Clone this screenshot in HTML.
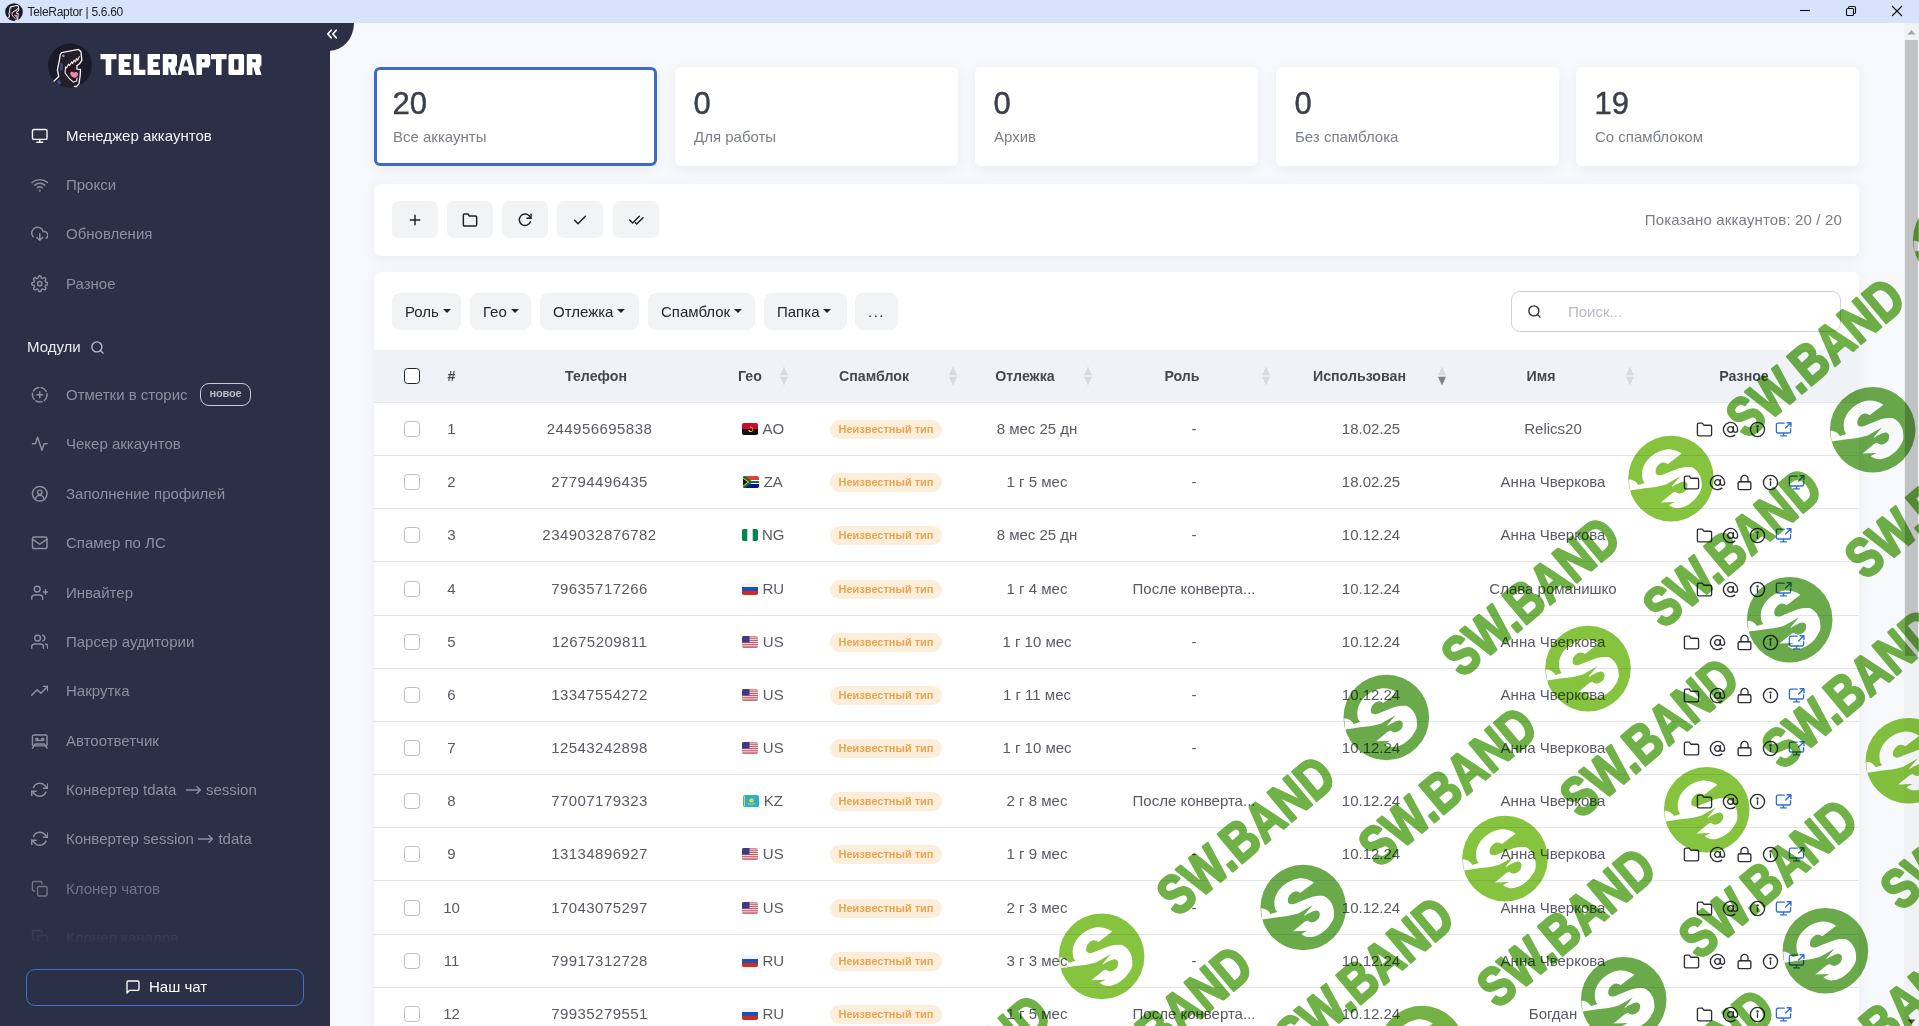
<!DOCTYPE html>
<html lang="ru">
<head>
<meta charset="utf-8">
<title>TeleRaptor | 5.6.60</title>
<style>
*{box-sizing:border-box;margin:0;padding:0}
html,body{width:1919px;height:1026px;overflow:hidden;background:#f8f9fc;font-family:"Liberation Sans",sans-serif;}
body{position:relative}
.abs{position:absolute}
/* title bar */
#titlebar{position:absolute;left:0;top:0;width:1919px;height:23px;background:#d6e3fb;}
#titlebar .ttl{position:absolute;left:27.5px;top:5px;font-size:12px;color:#1c1f26;line-height:15px;letter-spacing:-.3px}
#titlebar svg{position:absolute}
/* sidebar */
#sidebar{position:absolute;left:0;top:23px;width:330px;height:1003px;background:#2b3046;overflow:hidden}
#tab{z-index:2;position:absolute;left:318px;top:23px;width:36px;height:28px;background:#2b3046;border-bottom-right-radius:25px 28px;}
.mi{position:absolute;left:0;width:330px;height:24px;color:#8b90a0;font-size:15px;line-height:24px;white-space:nowrap}
.mi .t{position:absolute;left:66px;top:1px}
.mi svg{position:absolute;left:30.75px;top:4.25px;width:17.5px;height:17.5px;fill:none;stroke:currentColor;stroke-width:1.95;stroke-linecap:round;stroke-linejoin:round}
.mi.act{color:#f1f2f6}
/* main */
.card{position:absolute;background:#fff;border-radius:6px;box-shadow:0 3px 14px rgba(60,72,110,.07)}
.stat .n{position:absolute;left:18.5px;top:20px;font-size:31px;line-height:34px;color:#3b3f4a;-webkit-text-stroke:.45px #3b3f4a}
.stat .l{position:absolute;left:19px;top:59.5px;font-size:15px;line-height:20px;color:#7c7f88}
.tb{position:absolute;top:17px;width:46px;height:37px;border-radius:7px;background:#f1f3f5}
.tb svg{position:absolute;left:15px;top:10.5px;width:16px;height:16px;fill:none;stroke:#1d2026;stroke-width:2.2;stroke-linecap:round;stroke-linejoin:round}
.fb{position:absolute;top:21px;height:37px;border-radius:8px;background:#f1f3f5;font-size:15px;line-height:37px;color:#23262d;padding-left:13px;white-space:nowrap}
.fb i{display:inline-block;width:0;height:0;border-left:4px solid transparent;border-right:4px solid transparent;border-top:4.5px solid #23262d;margin-left:4px;vertical-align:3.8px}

.cb{position:absolute;width:16px;height:16px;border-radius:3.5px;background:#fff}
.hc{position:absolute;top:0;width:200px;text-align:center;font-size:14.2px;font-weight:bold;line-height:52px;color:#45494f;white-space:nowrap}
.row{position:absolute;left:0;width:1485px;height:53px;border-bottom:1px solid #e3e5e9}
.tc{position:absolute;top:0;width:200px;text-align:center;font-size:15px;line-height:52px;color:#585b63;white-space:nowrap}
.tx{font-size:15px;line-height:20px;color:#585b63}
.bd{position:absolute;left:456px;top:17px;width:112px;height:19px;border-radius:10px;background:#fdeedc;color:#e9a44e;font-size:11px;font-weight:bold;line-height:19px;text-align:center;white-space:nowrap}
.ri{position:absolute;top:18px;width:17px;height:17px;fill:none;stroke-width:1.9;stroke-linecap:round;stroke-linejoin:round}
</style>
</head>
<body>
<div id="titlebar">
  <svg style="left:5px;top:3px" width="18" height="18" viewBox="-0.5 0 45 45"><circle cx="22" cy="22.5" r="22" fill="#1a1b29"/>
<path d="M6.1 38.1L10.7 33.5L9.4 26.9L11.2 18.3L12.2 11.7L13.7 9.7L26.4 7.1L30.5 6.4L33 8.7L33.8 17.3L31.5 20.8L28.9 22.8V26.1L32.5 26.4L32.2 32.5L31 40.6L28.4 43.6L20 44.4L11 41.5Z" fill="#221f27"/>
<path d="M31.2 13.8L27.5 16.3L23.5 19L19.8 21.8L17.6 24L16.9 29.9L21.3 35.5L25.4 39.1L28.6 38L29.3 33.5L30.3 27L28.9 26.1V22.8L31.5 20.8Z" fill="#2b1720"/>
<path d="M12.5 20l2.6 1.2-.6 5.5-2.8 1.2zM8.6 38.5l3-2.6 1.6 4.6-2.4 1.6z" fill="#45448a"/>
<path d="M13.8 12.3l2.4-.9.6 2-2.2.9z" fill="#a58fb0"/>
<path d="M22 30.3Q23.5 27.6 26 29.8Q28.3 28.2 30 30.2Q30.2 33.6 27.4 34.8Q23.5 35 22 30.3Z" fill="#e98bab"/>
<path d="M31.3 13.6L29.7 17.2L28.6 15.4L27.4 19L26.2 17.1L24.6 20.6L23.6 18.9L21.6 22.4L20.6 21.1L18.6 25L17.6 23.8L17 29.9L21.3 35.5L25.4 39.1L28.6 38L29.1 35" fill="none" stroke="#f4eef3" stroke-width="2" stroke-linejoin="round" stroke-linecap="round"/>
<path d="M6.1 38.1L10.7 33.5L9.4 26.9L11.2 18.3L12.2 11.7L13.7 9.7L26.4 7.1L30.5 6.4L33 8.7L33.8 17.3L31.5 20.8L28.9 22.8V26.1L32.5 26.4L32.2 32.5L31 40.6L28.4 43.6L26.4 43.4" fill="none" stroke="#f4eef3" stroke-width="2.6" stroke-linejoin="round" stroke-linecap="round"/></svg>
  <div class="ttl">TeleRaptor | 5.6.60</div>
  <svg style="left:1799px;top:5px" width="12" height="12" viewBox="0 0 12 12"><path d="M1 5.5H11" stroke="#111" stroke-width="1.1" fill="none"/></svg>
  <svg style="left:1845px;top:5px" width="12" height="12" viewBox="0 0 12 12"><rect x="1.5" y="3.5" width="7" height="7" rx="1.3" fill="none" stroke="#111" stroke-width="1.1"/><path d="M3.5 3.5V2.8Q3.5 1.5 4.8 1.5H9.2Q10.5 1.5 10.5 2.8V7.2Q10.5 8.5 9.2 8.5H8.5" fill="none" stroke="#111" stroke-width="1.1"/></svg>
  <svg style="left:1891px;top:5px" width="12" height="12" viewBox="0 0 12 12"><path d="M1 1L11 11M11 1L1 11" stroke="#111" stroke-width="1.1" fill="none"/></svg>
</div>

<div id="tab"><svg class="abs" style="left:8px;top:6px" width="12" height="10" viewBox="0 0 14 12" fill="none" stroke="#fff" stroke-width="2.1" stroke-linecap="round" stroke-linejoin="round"><path d="M6 1.5L2 6l4 4.5M12 1.5L8 6l4 4.5"/></svg></div>
<div id="sidebar">
<!--SIDEBAR-->
<svg class="abs" style="left:48px;top:20px" width="44" height="45" viewBox="0 0 44 45"><circle cx="22" cy="22.5" r="22" fill="#1a1b29"/>
<path d="M6.1 38.1L10.7 33.5L9.4 26.9L11.2 18.3L12.2 11.7L13.7 9.7L26.4 7.1L30.5 6.4L33 8.7L33.8 17.3L31.5 20.8L28.9 22.8V26.1L32.5 26.4L32.2 32.5L31 40.6L28.4 43.6L20 44.4L11 41.5Z" fill="#221f27"/>
<path d="M31.2 13.8L27.5 16.3L23.5 19L19.8 21.8L17.6 24L16.9 29.9L21.3 35.5L25.4 39.1L28.6 38L29.3 33.5L30.3 27L28.9 26.1V22.8L31.5 20.8Z" fill="#2b1720"/>
<path d="M12.5 20l2.6 1.2-.6 5.5-2.8 1.2zM8.6 38.5l3-2.6 1.6 4.6-2.4 1.6z" fill="#45448a"/>
<path d="M13.8 12.3l2.4-.9.6 2-2.2.9z" fill="#a58fb0"/>
<path d="M22 30.3Q23.5 27.6 26 29.8Q28.3 28.2 30 30.2Q30.2 33.6 27.4 34.8Q23.5 35 22 30.3Z" fill="#e98bab"/>
<path d="M31.3 13.6L29.7 17.2L28.6 15.4L27.4 19L26.2 17.1L24.6 20.6L23.6 18.9L21.6 22.4L20.6 21.1L18.6 25L17.6 23.8L17 29.9L21.3 35.5L25.4 39.1L28.6 38L29.1 35" fill="none" stroke="#f4eef3" stroke-width="1.1" stroke-linejoin="round" stroke-linecap="round"/>
<path d="M6.1 38.1L10.7 33.5L9.4 26.9L11.2 18.3L12.2 11.7L13.7 9.7L26.4 7.1L30.5 6.4L33 8.7L33.8 17.3L31.5 20.8L28.9 22.8V26.1L32.5 26.4L32.2 32.5L31 40.6L28.4 43.6L26.4 43.4" fill="none" stroke="#f4eef3" stroke-width="1.35" stroke-linejoin="round" stroke-linecap="round"/></svg>
<svg class="abs" style="left:100px;top:31px" width="166" height="22" viewBox="0 0 166 22"><path fill="#fff" d="M0.50 0.00h16.00v5.20h-16.00zM5.70 0.00h5.60v21.00h-5.60zM18.70 0.00h5.60v21.00h-5.60zM18.70 0.00h12.40v5.20h-12.40zM18.70 7.90h10.80v5.20h-10.80zM18.70 15.80h12.40v5.20h-12.40zM33.60 0.00h5.60v21.00h-5.60zM33.60 15.80h11.80v5.20h-11.80zM47.60 0.00h5.60v21.00h-5.60zM47.60 0.00h12.40v5.20h-12.40zM47.60 7.90h10.80v5.20h-10.80zM47.60 15.80h12.40v5.20h-12.40zM62.80 0.00h5.60v21.00h-5.60zM62.80 0.00h13.00v5.20h-13.00zM71.40 1.20h5.60v10.60h-5.60zM62.80 8.30h13.00v5.20h-13.00zM68.90 12.5h5.60l2.60 8.50h-5.80zM77.40 21.0L82.70 0h6.8L94.80 21.0h-5.7l-1.0 -4.2h-6.00l-1.0 4.2zM83.50 12.6h5.2L86.10 4.6zM96.40 0.00h5.60v21.00h-5.60zM96.40 0.00h12.60v5.20h-12.60zM104.60 1.20h5.60v10.60h-5.60zM96.40 8.30h12.60v5.20h-12.60zM111.00 0.00h15.60v5.20h-15.60zM116.00 0.00h5.60v21.00h-5.60zM129.70 0h13.20l1.2 1.2v18.6l-1.2 1.2h-13.20l-1.2 -1.2v-18.6zM134.10 5.2v10.6h4.40v-10.6zM146.80 0.00h5.60v21.00h-5.60zM146.80 0.00h13.40v5.20h-13.40zM155.80 1.20h5.60v10.60h-5.60zM146.80 8.30h13.40v5.20h-13.40zM153.30 12.5h5.60l2.60 8.50h-5.80z"/></svg>
<div class="mi act" style="top:100px;"><svg viewBox="0 0 24 24"><rect x="2" y="3.5" width="20" height="13.5" rx="2"/><path d="M8 21h8M12 17v4"/></svg><span class="t">Менеджер аккаунтов</span></div>
<div class="mi " style="top:149px;"><svg viewBox="0 0 24 24"><path d="M5 12.55a11 11 0 0 1 14.08 0M1.42 9a16 16 0 0 1 21.16 0M8.53 16.11a6 6 0 0 1 6.95 0"/><circle cx="12" cy="20" r=".6"/></svg><span class="t">Прокси</span></div>
<div class="mi " style="top:198px;"><svg viewBox="0 0 24 24"><path d="M8 17l4 4 4-4M12 12v9"/><path d="M20.88 18.09A5 5 0 0 0 18 9h-1.26A8 8 0 1 0 3 16.29"/></svg><span class="t">Обновления</span></div>
<div class="mi " style="top:248px;"><svg viewBox="0 0 24 24"><circle cx="12" cy="12" r="3"/><path d="M19.4 15a1.65 1.65 0 0 0 .33 1.82l.06.06a2 2 0 1 1-2.83 2.83l-.06-.06a1.65 1.65 0 0 0-1.82-.33 1.65 1.65 0 0 0-1 1.51V21a2 2 0 0 1-4 0v-.09A1.65 1.65 0 0 0 9 19.4a1.65 1.65 0 0 0-1.82.33l-.06.06a2 2 0 1 1-2.83-2.83l.06-.06a1.65 1.65 0 0 0 .33-1.82 1.65 1.65 0 0 0-1.51-1H3a2 2 0 0 1 0-4h.09A1.65 1.65 0 0 0 4.6 9a1.65 1.65 0 0 0-.33-1.82l-.06-.06a2 2 0 1 1 2.83-2.83l.06.06a1.65 1.65 0 0 0 1.82.33H9a1.65 1.65 0 0 0 1-1.51V3a2 2 0 0 1 4 0v.09a1.65 1.65 0 0 0 1 1.51 1.65 1.65 0 0 0 1.82-.33l.06-.06a2 2 0 1 1 2.83 2.83l-.06.06a1.65 1.65 0 0 0-.33 1.82V9a1.65 1.65 0 0 0 1.51 1H21a2 2 0 0 1 0 4h-.09a1.65 1.65 0 0 0-1.51 1z"/></svg><span class="t">Разное</span></div>
<div class="abs" style="left:27px;top:312px;font-size:15px;line-height:24px;color:#e9ebf1">Модули</div><svg class="abs" style="left:90px;top:317px" width="15" height="15" viewBox="0 0 24 24" fill="none" stroke="#b9bcc8" stroke-width="2.2" stroke-linecap="round"><circle cx="11" cy="11" r="8"/><path d="M21 21l-4.3-4.3"/></svg>
<div class="mi " style="top:359px;"><svg viewBox="0 0 24 24"><circle cx="12" cy="12" r="10" stroke-dasharray="9 3.2"/><path d="M12 8v8M8 12h8"/></svg><span class="t">Отметки в сторис</span><span class="abs" style="left:200px;top:1px;width:51px;height:23px;border:1.5px solid #c9ccd6;border-radius:9px;font-size:11px;font-weight:bold;line-height:19px;letter-spacing:-.2px;text-align:center;color:#b7bac6">новое</span></div>
<div class="mi " style="top:408px;"><svg viewBox="0 0 24 24"><path d="M22 12h-4l-3 9L9 3l-3 9H2"/></svg><span class="t">Чекер аккаунтов</span></div>
<div class="mi " style="top:458px;"><svg viewBox="0 0 24 24"><circle cx="12" cy="12" r="10"/><circle cx="12" cy="10" r="3"/><path d="M6.2 18.7a6 6 0 0 1 11.6 0"/></svg><span class="t">Заполнение профилей</span></div>
<div class="mi " style="top:507px;"><svg viewBox="0 0 24 24"><rect x="2" y="4" width="20" height="16" rx="2.5"/><path d="M22 7l-10 7L2 7"/></svg><span class="t">Спамер по ЛС</span></div>
<div class="mi " style="top:557px;"><svg viewBox="0 0 24 24"><path d="M16 21v-2a4 4 0 0 0-4-4H5a4 4 0 0 0-4 4v2"/><circle cx="8.5" cy="7" r="4"/><path d="M20 8v6M23 11h-6"/></svg><span class="t">Инвайтер</span></div>
<div class="mi " style="top:606px;"><svg viewBox="0 0 24 24"><path d="M17 21v-2a4 4 0 0 0-4-4H5a4 4 0 0 0-4 4v2"/><circle cx="9" cy="7" r="4"/><path d="M23 21v-2a4 4 0 0 0-3-3.87M16 3.13a4 4 0 0 1 0 7.75"/></svg><span class="t">Парсер аудитории</span></div>
<div class="mi " style="top:655px;"><svg viewBox="0 0 24 24"><path d="M23 6l-9.5 9.5-5-5L1 18"/><path d="M17 6h6v6"/></svg><span class="t">Накрутка</span></div>
<div class="mi " style="top:705px;"><svg viewBox="0 0 24 24"><rect x="2" y="4" width="20" height="15" rx="2"/><circle cx="8" cy="10" r="1.6"/><circle cx="16" cy="10" r="1.6"/><path d="M8 11.6h8M2 22l3.5-5.5h13L22 22"/></svg><span class="t">Автоответчик</span></div>
<div class="mi " style="top:754px;"><svg viewBox="0 0 24 24"><path d="M23 4v6h-6M1 20v-6h6"/><path d="M3.51 9a9 9 0 0 1 14.85-3.36L23 10M1 14l4.64 4.36A9 9 0 0 0 20.49 15"/></svg><span class="t">Конвертер tdata<svg style="position:static;display:inline-block;width:15px;height:10px;margin:0 5px 0 9.5px;stroke-width:1.35" viewBox="0 0 15 10"><path d="M.5 5h14M10.8 1.6L14.5 5l-3.7 3.4"/></svg>session</span></div>
<div class="mi " style="top:803px;"><svg viewBox="0 0 24 24"><path d="M23 4v6h-6M1 20v-6h6"/><path d="M3.51 9a9 9 0 0 1 14.85-3.36L23 10M1 14l4.64 4.36A9 9 0 0 0 20.49 15"/></svg><span class="t">Конвертер session<svg style="position:static;display:inline-block;width:15px;height:10px;margin:0 5px 0 4.5px;stroke-width:1.35" viewBox="0 0 15 10"><path d="M.5 5h14M10.8 1.6L14.5 5l-3.7 3.4"/></svg>tdata</span></div>
<div class="mi " style="top:853px;opacity:.7"><svg viewBox="0 0 24 24"><rect x="9" y="9" width="13" height="13" rx="2"/><path d="M5 15H4a2 2 0 0 1-2-2V4a2 2 0 0 1 2-2h9a2 2 0 0 1 2 2v1"/></svg><span class="t">Клонер чатов</span></div>
<div class="mi " style="top:902px;opacity:.35"><svg viewBox="0 0 24 24"><rect x="9" y="9" width="13" height="13" rx="2"/><path d="M5 15H4a2 2 0 0 1-2-2V4a2 2 0 0 1 2-2h9a2 2 0 0 1 2 2v1"/></svg><span class="t">Клонер каналов</span></div>
<div class="abs" style="left:0;top:888px;width:330px;height:31px;background:linear-gradient(#2b304600,#2b3046cc)"></div><div class="abs" style="left:0;top:919px;width:330px;height:28px;background:#2b3046"></div>
<div class="abs" style="left:26px;top:946px;width:278px;height:37px;border:1.5px solid #3f6fd0;border-radius:9px;color:#fff;font-size:15px;line-height:34px"><svg class="abs" style="left:98px;top:9px" width="16" height="16" viewBox="0 0 24 24" fill="none" stroke="#fff" stroke-width="2" stroke-linejoin="round"><path d="M21 15a2 2 0 0 1-2 2H7l-4 4V5a2 2 0 0 1 2-2h14a2 2 0 0 1 2 2z"/></svg><span class="abs" style="left:122px;top:0">Наш чат</span></div>
<!--/SIDEBAR-->
</div>

<div id="main">
<!--MAIN-->
<div class="card stat" style="left:374px;top:67px;width:283px;height:99px;border:3px solid #3e6bc4;"><div class="n" style="margin:-3px 0 0 -3px">20</div><div class="l" style="margin:-3px 0 0 -3px">Все аккаунты</div></div>
<div class="card stat" style="left:675px;top:67px;width:283px;height:99px;"><div class="n" style="margin:0px 0 0 0px">0</div><div class="l" style="margin:0px 0 0 0px">Для работы</div></div>
<div class="card stat" style="left:975px;top:67px;width:283px;height:99px;"><div class="n" style="margin:0px 0 0 0px">0</div><div class="l" style="margin:0px 0 0 0px">Архив</div></div>
<div class="card stat" style="left:1276px;top:67px;width:283px;height:99px;"><div class="n" style="margin:0px 0 0 0px">0</div><div class="l" style="margin:0px 0 0 0px">Без спамблока</div></div>
<div class="card stat" style="left:1576px;top:67px;width:283px;height:99px;"><div class="n" style="margin:0px 0 0 0px">19</div><div class="l" style="margin:0px 0 0 0px">Со спамблоком</div></div>
<div class="card" style="left:374px;top:184px;width:1485px;height:72px"><div class="tb" style="left:18px"><svg viewBox="0 0 24 24"><path d="M12 5v14M5 12h14"/></svg></div><div class="tb" style="left:73px"><svg viewBox="0 0 24 24"><path d="M22 19a2 2 0 0 1-2 2H4a2 2 0 0 1-2-2V5a2 2 0 0 1 2-2h5l2 3h9a2 2 0 0 1 2 2z"/></svg></div><div class="tb" style="left:128px"><svg viewBox="0 0 24 24"><path d="M21 3.5v6h-6"/><path d="M20.2 14.5A8.6 8.6 0 1 1 18.2 5.6L21 9.5"/></svg></div><div class="tb" style="left:183px"><svg viewBox="0 0 24 24"><path d="M20 6.5L9 17.5l-5-5"/></svg></div><div class="tb" style="left:238.5px"><svg viewBox="0 0 24 24"><path d="M17 6.5L7 16.5l-4.5-4.5"/><path d="M22.5 8.5L13 18l-1.8-1.8"/></svg></div><div class="abs" style="right:17px;top:26px;font-size:15px;line-height:20px;color:#7a7d86;white-space:nowrap;letter-spacing:.15px">Показано аккаунтов: 20 / 20</div></div>
<div class="card" style="left:374px;top:272px;width:1485px;height:800px;overflow:hidden"><div class="fb" style="left:18px;width:69px">Роль<i></i></div><div class="fb" style="left:96px;width:61px">Гео<i></i></div><div class="fb" style="left:166px;width:99px">Отлежка<i></i></div><div class="fb" style="left:274px;width:107px">Спамблок<i></i></div><div class="fb" style="left:390px;width:83px">Папка<i></i></div><div class="fb" style="left:481px;width:43px;padding-left:13px;letter-spacing:1.5px">...</div><div class="abs" style="left:1137px;top:19px;width:330px;height:41px;border:1px solid #cfd2d8;border-radius:9px;background:#fff"><svg class="abs" style="left:15px;top:12px" width="15" height="15" viewBox="0 0 24 24" fill="none" stroke="#2a2d34" stroke-width="2.2" stroke-linecap="round"><circle cx="11" cy="11" r="8"/><path d="M21 21l-4.3-4.3"/></svg><span class="abs" style="left:56px;top:10px;font-size:15px;line-height:20px;color:#b8bbc2">Поиск...</span></div><div class="abs" style="left:0;top:78px;width:1485px;height:53px;background:#eff2f6;border-bottom:1px solid #e4e6ea"><span class="cb" style="left:30px;top:18px;border:1.5px solid #22252b;"></span><span class="hc" style="left:-22.5px">#</span><span class="hc" style="left:122px">Телефон</span><span class="hc" style="left:276px">Гео</span><svg class="abs" style="left:405px;top:15.5px" width="10" height="20" viewBox="0 0 10 20"><path d="M5 .5L9 9.3H1z" fill="#d7dae0"/><path d="M5 19.5L9 10.7H1z" fill="#d7dae0"/></svg><span class="hc" style="left:400px">Спамблок</span><svg class="abs" style="left:574px;top:15.5px" width="10" height="20" viewBox="0 0 10 20"><path d="M5 .5L9 9.3H1z" fill="#d7dae0"/><path d="M5 19.5L9 10.7H1z" fill="#d7dae0"/></svg><span class="hc" style="left:551px">Отлежка</span><svg class="abs" style="left:708.5px;top:15.5px" width="10" height="20" viewBox="0 0 10 20"><path d="M5 .5L9 9.3H1z" fill="#d7dae0"/><path d="M5 19.5L9 10.7H1z" fill="#d7dae0"/></svg><span class="hc" style="left:708px">Роль</span><svg class="abs" style="left:887px;top:15.5px" width="10" height="20" viewBox="0 0 10 20"><path d="M5 .5L9 9.3H1z" fill="#d7dae0"/><path d="M5 19.5L9 10.7H1z" fill="#d7dae0"/></svg><span class="hc" style="left:885.5px">Использован</span><svg class="abs" style="left:1063px;top:15.5px" width="10" height="20" viewBox="0 0 10 20"><path d="M5 .5L9 9.3H1z" fill="#d7dae0"/><path d="M5 19.5L9 10.7H1z" fill="#7e828a"/></svg><span class="hc" style="left:1067px">Имя</span><svg class="abs" style="left:1250.5px;top:15.5px" width="10" height="20" viewBox="0 0 10 20"><path d="M5 .5L9 9.3H1z" fill="#d7dae0"/><path d="M5 19.5L9 10.7H1z" fill="#d7dae0"/></svg><span class="hc" style="left:1270px">Разное</span></div><div class="row" style="top:131.0px"><span class="cb" style="left:30px;top:18px;border:1px solid #b9bcc3;"></span><span class="tc" style="left:-22.5px;">1</span><span class="tc" style="left:125.5px;letter-spacing:.45px">244956695838</span><span class="abs" style="left:289px;top:0;width:200px;height:52px;display:flex;align-items:center;justify-content:center"><svg width="16" height="12" viewBox="0 0 16 12" style="margin-right:4.5px;flex:none"><clipPath id="c0"><rect width="16" height="12" rx="1.8"/></clipPath><g clip-path="url(#c0)"><rect width="16" height="6" fill="#cc092f"/><rect y="6" width="16" height="6" fill="#111"/><path d="M6.2 7.5a2.6 2.6 0 1 0 1.5-3.6l1 .9a1.6 1.6 0 1 1-1.2 2.2z" fill="#f9d616"/></g></svg><span class="tx">AO</span></span><span class="bd">Неизвестный тип</span><span class="tc" style="left:563px;">8 мес 25 дн</span><span class="tc" style="left:720px;">-</span><span class="tc" style="left:897px;">18.02.25</span><span class="tc" style="left:1079px;">Relics20</span><svg class="ri" style="left:1322.2px;stroke:#2b2e35" viewBox="0 0 24 24"><path d="M22 19a2 2 0 0 1-2 2H4a2 2 0 0 1-2-2V5a2 2 0 0 1 2-2h5l2 3h9a2 2 0 0 1 2 2z"/></svg><svg class="ri" style="left:1348.4px;stroke:#2b2e35" viewBox="0 0 24 24"><circle cx="12" cy="12" r="4"/><path d="M16 8v5a3 3 0 0 0 6 0v-1a10 10 0 1 0-3.92 7.94"/></svg><svg class="ri" style="left:1374.6px;stroke:#2b2e35" viewBox="0 0 24 24"><circle cx="12" cy="12" r="10"/><path d="M12 16v-5"/><circle cx="12" cy="7.6" r=".7" fill="#2b2e35"/></svg><svg class="ri" style="left:1400.8px;stroke:#2f6ed3" viewBox="0 0 24 24"><path d="M13 3H4a2 2 0 0 0-2 2v10a2 2 0 0 0 2 2h16a2 2 0 0 0 2-2v-4M8 21h8M12 17v4M17 2.5h5.5V8M22.5 2.5L15 10"/></svg></div><div class="row" style="top:184.17px"><span class="cb" style="left:30px;top:18px;border:1px solid #b9bcc3;"></span><span class="tc" style="left:-22.5px;">2</span><span class="tc" style="left:125.5px;letter-spacing:.45px">27794496435</span><span class="abs" style="left:289px;top:0;width:200px;height:52px;display:flex;align-items:center;justify-content:center"><svg width="16" height="12" viewBox="0 0 16 12" style="margin-right:4.5px;flex:none"><clipPath id="c1"><rect width="16" height="12" rx="1.8"/></clipPath><g clip-path="url(#c1)"><rect width="16" height="12" fill="#fff"/><rect width="16" height="4" fill="#e03c31"/><rect y="8" width="16" height="4" fill="#001489"/><path d="M0 0l8 6-8 6z" fill="#007749"/><path d="M0 1.2v9.6L6.4 6z" fill="#ffb81c"/><path d="M0 2.6v6.8L4.5 6z" fill="#111"/><path d="M0 0h2l6.5 4.9H16v2.2H8.5L2 12H0v-1.2L6.4 6 0 1.2z" fill="#007749"/></g></svg><span class="tx">ZA</span></span><span class="bd">Неизвестный тип</span><span class="tc" style="left:563px;">1 г 5 мес</span><span class="tc" style="left:720px;">-</span><span class="tc" style="left:897px;">18.02.25</span><span class="tc" style="left:1079px;">Анна Чверкова</span><svg class="ri" style="left:1309.1px;stroke:#2b2e35" viewBox="0 0 24 24"><path d="M22 19a2 2 0 0 1-2 2H4a2 2 0 0 1-2-2V5a2 2 0 0 1 2-2h5l2 3h9a2 2 0 0 1 2 2z"/></svg><svg class="ri" style="left:1335.3px;stroke:#2b2e35" viewBox="0 0 24 24"><circle cx="12" cy="12" r="4"/><path d="M16 8v5a3 3 0 0 0 6 0v-1a10 10 0 1 0-3.92 7.94"/></svg><svg class="ri" style="left:1361.5px;stroke:#2b2e35" viewBox="0 0 24 24"><rect x="3" y="11" width="18" height="11" rx="2"/><path d="M7 11V7a5 5 0 0 1 10 0v4"/></svg><svg class="ri" style="left:1387.7px;stroke:#2b2e35" viewBox="0 0 24 24"><circle cx="12" cy="12" r="10"/><path d="M12 16v-5"/><circle cx="12" cy="7.6" r=".7" fill="#2b2e35"/></svg><svg class="ri" style="left:1413.9px;stroke:#2f6ed3" viewBox="0 0 24 24"><path d="M13 3H4a2 2 0 0 0-2 2v10a2 2 0 0 0 2 2h16a2 2 0 0 0 2-2v-4M8 21h8M12 17v4M17 2.5h5.5V8M22.5 2.5L15 10"/></svg></div><div class="row" style="top:237.34px"><span class="cb" style="left:30px;top:18px;border:1px solid #b9bcc3;"></span><span class="tc" style="left:-22.5px;">3</span><span class="tc" style="left:125.5px;letter-spacing:.45px">2349032876782</span><span class="abs" style="left:289px;top:0;width:200px;height:52px;display:flex;align-items:center;justify-content:center"><svg width="16" height="12" viewBox="0 0 16 12" style="margin-right:4.5px;flex:none"><clipPath id="c2"><rect width="16" height="12" rx="1.8"/></clipPath><g clip-path="url(#c2)"><rect width="16" height="12" fill="#fff"/><rect width="5.3" height="12" fill="#008751"/><rect x="10.7" width="5.3" height="12" fill="#008751"/></g></svg><span class="tx">NG</span></span><span class="bd">Неизвестный тип</span><span class="tc" style="left:563px;">8 мес 25 дн</span><span class="tc" style="left:720px;">-</span><span class="tc" style="left:897px;">10.12.24</span><span class="tc" style="left:1079px;">Анна Чверкова</span><svg class="ri" style="left:1322.2px;stroke:#2b2e35" viewBox="0 0 24 24"><path d="M22 19a2 2 0 0 1-2 2H4a2 2 0 0 1-2-2V5a2 2 0 0 1 2-2h5l2 3h9a2 2 0 0 1 2 2z"/></svg><svg class="ri" style="left:1348.4px;stroke:#2b2e35" viewBox="0 0 24 24"><circle cx="12" cy="12" r="4"/><path d="M16 8v5a3 3 0 0 0 6 0v-1a10 10 0 1 0-3.92 7.94"/></svg><svg class="ri" style="left:1374.6px;stroke:#2b2e35" viewBox="0 0 24 24"><circle cx="12" cy="12" r="10"/><path d="M12 16v-5"/><circle cx="12" cy="7.6" r=".7" fill="#2b2e35"/></svg><svg class="ri" style="left:1400.8px;stroke:#2f6ed3" viewBox="0 0 24 24"><path d="M13 3H4a2 2 0 0 0-2 2v10a2 2 0 0 0 2 2h16a2 2 0 0 0 2-2v-4M8 21h8M12 17v4M17 2.5h5.5V8M22.5 2.5L15 10"/></svg></div><div class="row" style="top:290.51px"><span class="cb" style="left:30px;top:18px;border:1px solid #b9bcc3;"></span><span class="tc" style="left:-22.5px;">4</span><span class="tc" style="left:125.5px;letter-spacing:.45px">79635717266</span><span class="abs" style="left:289px;top:0;width:200px;height:52px;display:flex;align-items:center;justify-content:center"><svg width="16" height="12" viewBox="0 0 16 12" style="margin-right:4.5px;flex:none"><clipPath id="c3"><rect width="16" height="12" rx="1.8"/></clipPath><g clip-path="url(#c3)"><rect width="16" height="4" fill="#f4f4f6"/><rect y="4" width="16" height="4" fill="#1c50b8"/><rect y="8" width="16" height="4" fill="#d52b1e"/></g></svg><span class="tx">RU</span></span><span class="bd">Неизвестный тип</span><span class="tc" style="left:563px;">1 г 4 мес</span><span class="tc" style="left:720px;">После конверта...</span><span class="tc" style="left:897px;">10.12.24</span><span class="tc" style="left:1079px;">Слава романишко</span><svg class="ri" style="left:1322.2px;stroke:#2b2e35" viewBox="0 0 24 24"><path d="M22 19a2 2 0 0 1-2 2H4a2 2 0 0 1-2-2V5a2 2 0 0 1 2-2h5l2 3h9a2 2 0 0 1 2 2z"/></svg><svg class="ri" style="left:1348.4px;stroke:#2b2e35" viewBox="0 0 24 24"><circle cx="12" cy="12" r="4"/><path d="M16 8v5a3 3 0 0 0 6 0v-1a10 10 0 1 0-3.92 7.94"/></svg><svg class="ri" style="left:1374.6px;stroke:#2b2e35" viewBox="0 0 24 24"><circle cx="12" cy="12" r="10"/><path d="M12 16v-5"/><circle cx="12" cy="7.6" r=".7" fill="#2b2e35"/></svg><svg class="ri" style="left:1400.8px;stroke:#2f6ed3" viewBox="0 0 24 24"><path d="M13 3H4a2 2 0 0 0-2 2v10a2 2 0 0 0 2 2h16a2 2 0 0 0 2-2v-4M8 21h8M12 17v4M17 2.5h5.5V8M22.5 2.5L15 10"/></svg></div><div class="row" style="top:343.68px"><span class="cb" style="left:30px;top:18px;border:1px solid #b9bcc3;"></span><span class="tc" style="left:-22.5px;">5</span><span class="tc" style="left:125.5px;letter-spacing:.45px">12675209811</span><span class="abs" style="left:289px;top:0;width:200px;height:52px;display:flex;align-items:center;justify-content:center"><svg width="16" height="12" viewBox="0 0 16 12" style="margin-right:4.5px;flex:none"><clipPath id="c4"><rect width="16" height="12" rx="1.8"/></clipPath><g clip-path="url(#c4)"><rect width="16" height="12" fill="#f4f4f4"/><path d="M0 .9h16M0 2.75h16M0 4.6h16M0 6.45h16M0 8.3h16M0 10.15h16M0 11.7h16" stroke="#c23b4b" stroke-width=".9"/><rect width="7.5" height="6.4" fill="#3c3b80"/></g></svg><span class="tx">US</span></span><span class="bd">Неизвестный тип</span><span class="tc" style="left:563px;">1 г 10 мес</span><span class="tc" style="left:720px;">-</span><span class="tc" style="left:897px;">10.12.24</span><span class="tc" style="left:1079px;">Анна Чверкова</span><svg class="ri" style="left:1309.1px;stroke:#2b2e35" viewBox="0 0 24 24"><path d="M22 19a2 2 0 0 1-2 2H4a2 2 0 0 1-2-2V5a2 2 0 0 1 2-2h5l2 3h9a2 2 0 0 1 2 2z"/></svg><svg class="ri" style="left:1335.3px;stroke:#2b2e35" viewBox="0 0 24 24"><circle cx="12" cy="12" r="4"/><path d="M16 8v5a3 3 0 0 0 6 0v-1a10 10 0 1 0-3.92 7.94"/></svg><svg class="ri" style="left:1361.5px;stroke:#2b2e35" viewBox="0 0 24 24"><rect x="3" y="11" width="18" height="11" rx="2"/><path d="M7 11V7a5 5 0 0 1 10 0v4"/></svg><svg class="ri" style="left:1387.7px;stroke:#2b2e35" viewBox="0 0 24 24"><circle cx="12" cy="12" r="10"/><path d="M12 16v-5"/><circle cx="12" cy="7.6" r=".7" fill="#2b2e35"/></svg><svg class="ri" style="left:1413.9px;stroke:#2f6ed3" viewBox="0 0 24 24"><path d="M13 3H4a2 2 0 0 0-2 2v10a2 2 0 0 0 2 2h16a2 2 0 0 0 2-2v-4M8 21h8M12 17v4M17 2.5h5.5V8M22.5 2.5L15 10"/></svg></div><div class="row" style="top:396.85px"><span class="cb" style="left:30px;top:18px;border:1px solid #b9bcc3;"></span><span class="tc" style="left:-22.5px;">6</span><span class="tc" style="left:125.5px;letter-spacing:.45px">13347554272</span><span class="abs" style="left:289px;top:0;width:200px;height:52px;display:flex;align-items:center;justify-content:center"><svg width="16" height="12" viewBox="0 0 16 12" style="margin-right:4.5px;flex:none"><clipPath id="c5"><rect width="16" height="12" rx="1.8"/></clipPath><g clip-path="url(#c5)"><rect width="16" height="12" fill="#f4f4f4"/><path d="M0 .9h16M0 2.75h16M0 4.6h16M0 6.45h16M0 8.3h16M0 10.15h16M0 11.7h16" stroke="#c23b4b" stroke-width=".9"/><rect width="7.5" height="6.4" fill="#3c3b80"/></g></svg><span class="tx">US</span></span><span class="bd">Неизвестный тип</span><span class="tc" style="left:563px;">1 г 11 мес</span><span class="tc" style="left:720px;">-</span><span class="tc" style="left:897px;">10.12.24</span><span class="tc" style="left:1079px;">Анна Чверкова</span><svg class="ri" style="left:1309.1px;stroke:#2b2e35" viewBox="0 0 24 24"><path d="M22 19a2 2 0 0 1-2 2H4a2 2 0 0 1-2-2V5a2 2 0 0 1 2-2h5l2 3h9a2 2 0 0 1 2 2z"/></svg><svg class="ri" style="left:1335.3px;stroke:#2b2e35" viewBox="0 0 24 24"><circle cx="12" cy="12" r="4"/><path d="M16 8v5a3 3 0 0 0 6 0v-1a10 10 0 1 0-3.92 7.94"/></svg><svg class="ri" style="left:1361.5px;stroke:#2b2e35" viewBox="0 0 24 24"><rect x="3" y="11" width="18" height="11" rx="2"/><path d="M7 11V7a5 5 0 0 1 10 0v4"/></svg><svg class="ri" style="left:1387.7px;stroke:#2b2e35" viewBox="0 0 24 24"><circle cx="12" cy="12" r="10"/><path d="M12 16v-5"/><circle cx="12" cy="7.6" r=".7" fill="#2b2e35"/></svg><svg class="ri" style="left:1413.9px;stroke:#2f6ed3" viewBox="0 0 24 24"><path d="M13 3H4a2 2 0 0 0-2 2v10a2 2 0 0 0 2 2h16a2 2 0 0 0 2-2v-4M8 21h8M12 17v4M17 2.5h5.5V8M22.5 2.5L15 10"/></svg></div><div class="row" style="top:450.02px"><span class="cb" style="left:30px;top:18px;border:1px solid #b9bcc3;"></span><span class="tc" style="left:-22.5px;">7</span><span class="tc" style="left:125.5px;letter-spacing:.45px">12543242898</span><span class="abs" style="left:289px;top:0;width:200px;height:52px;display:flex;align-items:center;justify-content:center"><svg width="16" height="12" viewBox="0 0 16 12" style="margin-right:4.5px;flex:none"><clipPath id="c6"><rect width="16" height="12" rx="1.8"/></clipPath><g clip-path="url(#c6)"><rect width="16" height="12" fill="#f4f4f4"/><path d="M0 .9h16M0 2.75h16M0 4.6h16M0 6.45h16M0 8.3h16M0 10.15h16M0 11.7h16" stroke="#c23b4b" stroke-width=".9"/><rect width="7.5" height="6.4" fill="#3c3b80"/></g></svg><span class="tx">US</span></span><span class="bd">Неизвестный тип</span><span class="tc" style="left:563px;">1 г 10 мес</span><span class="tc" style="left:720px;">-</span><span class="tc" style="left:897px;">10.12.24</span><span class="tc" style="left:1079px;">Анна Чверкова</span><svg class="ri" style="left:1309.1px;stroke:#2b2e35" viewBox="0 0 24 24"><path d="M22 19a2 2 0 0 1-2 2H4a2 2 0 0 1-2-2V5a2 2 0 0 1 2-2h5l2 3h9a2 2 0 0 1 2 2z"/></svg><svg class="ri" style="left:1335.3px;stroke:#2b2e35" viewBox="0 0 24 24"><circle cx="12" cy="12" r="4"/><path d="M16 8v5a3 3 0 0 0 6 0v-1a10 10 0 1 0-3.92 7.94"/></svg><svg class="ri" style="left:1361.5px;stroke:#2b2e35" viewBox="0 0 24 24"><rect x="3" y="11" width="18" height="11" rx="2"/><path d="M7 11V7a5 5 0 0 1 10 0v4"/></svg><svg class="ri" style="left:1387.7px;stroke:#2b2e35" viewBox="0 0 24 24"><circle cx="12" cy="12" r="10"/><path d="M12 16v-5"/><circle cx="12" cy="7.6" r=".7" fill="#2b2e35"/></svg><svg class="ri" style="left:1413.9px;stroke:#2f6ed3" viewBox="0 0 24 24"><path d="M13 3H4a2 2 0 0 0-2 2v10a2 2 0 0 0 2 2h16a2 2 0 0 0 2-2v-4M8 21h8M12 17v4M17 2.5h5.5V8M22.5 2.5L15 10"/></svg></div><div class="row" style="top:503.19px"><span class="cb" style="left:30px;top:18px;border:1px solid #b9bcc3;"></span><span class="tc" style="left:-22.5px;">8</span><span class="tc" style="left:125.5px;letter-spacing:.45px">77007179323</span><span class="abs" style="left:289px;top:0;width:200px;height:52px;display:flex;align-items:center;justify-content:center"><svg width="16" height="12" viewBox="0 0 16 12" style="margin-right:4.5px;flex:none"><clipPath id="c7"><rect width="16" height="12" rx="1.8"/></clipPath><g clip-path="url(#c7)"><rect width="16" height="12" fill="#26b2c9"/><circle cx="8.5" cy="5.4" r="2.2" fill="#f5d33c"/><path d="M5 8.6q3.5 2 7 0" stroke="#f5d33c" stroke-width=".9" fill="none"/><rect x=".8" y=".8" width="1.2" height="10.4" fill="#e8cf4a"/></g></svg><span class="tx">KZ</span></span><span class="bd">Неизвестный тип</span><span class="tc" style="left:563px;">2 г 8 мес</span><span class="tc" style="left:720px;">После конверта...</span><span class="tc" style="left:897px;">10.12.24</span><span class="tc" style="left:1079px;">Анна Чверкова</span><svg class="ri" style="left:1322.2px;stroke:#2b2e35" viewBox="0 0 24 24"><path d="M22 19a2 2 0 0 1-2 2H4a2 2 0 0 1-2-2V5a2 2 0 0 1 2-2h5l2 3h9a2 2 0 0 1 2 2z"/></svg><svg class="ri" style="left:1348.4px;stroke:#2b2e35" viewBox="0 0 24 24"><circle cx="12" cy="12" r="4"/><path d="M16 8v5a3 3 0 0 0 6 0v-1a10 10 0 1 0-3.92 7.94"/></svg><svg class="ri" style="left:1374.6px;stroke:#2b2e35" viewBox="0 0 24 24"><circle cx="12" cy="12" r="10"/><path d="M12 16v-5"/><circle cx="12" cy="7.6" r=".7" fill="#2b2e35"/></svg><svg class="ri" style="left:1400.8px;stroke:#2f6ed3" viewBox="0 0 24 24"><path d="M13 3H4a2 2 0 0 0-2 2v10a2 2 0 0 0 2 2h16a2 2 0 0 0 2-2v-4M8 21h8M12 17v4M17 2.5h5.5V8M22.5 2.5L15 10"/></svg></div><div class="row" style="top:556.36px"><span class="cb" style="left:30px;top:18px;border:1px solid #b9bcc3;"></span><span class="tc" style="left:-22.5px;">9</span><span class="tc" style="left:125.5px;letter-spacing:.45px">13134896927</span><span class="abs" style="left:289px;top:0;width:200px;height:52px;display:flex;align-items:center;justify-content:center"><svg width="16" height="12" viewBox="0 0 16 12" style="margin-right:4.5px;flex:none"><clipPath id="c8"><rect width="16" height="12" rx="1.8"/></clipPath><g clip-path="url(#c8)"><rect width="16" height="12" fill="#f4f4f4"/><path d="M0 .9h16M0 2.75h16M0 4.6h16M0 6.45h16M0 8.3h16M0 10.15h16M0 11.7h16" stroke="#c23b4b" stroke-width=".9"/><rect width="7.5" height="6.4" fill="#3c3b80"/></g></svg><span class="tx">US</span></span><span class="bd">Неизвестный тип</span><span class="tc" style="left:563px;">1 г 9 мес</span><span class="tc" style="left:720px;">-</span><span class="tc" style="left:897px;">10.12.24</span><span class="tc" style="left:1079px;">Анна Чверкова</span><svg class="ri" style="left:1309.1px;stroke:#2b2e35" viewBox="0 0 24 24"><path d="M22 19a2 2 0 0 1-2 2H4a2 2 0 0 1-2-2V5a2 2 0 0 1 2-2h5l2 3h9a2 2 0 0 1 2 2z"/></svg><svg class="ri" style="left:1335.3px;stroke:#2b2e35" viewBox="0 0 24 24"><circle cx="12" cy="12" r="4"/><path d="M16 8v5a3 3 0 0 0 6 0v-1a10 10 0 1 0-3.92 7.94"/></svg><svg class="ri" style="left:1361.5px;stroke:#2b2e35" viewBox="0 0 24 24"><rect x="3" y="11" width="18" height="11" rx="2"/><path d="M7 11V7a5 5 0 0 1 10 0v4"/></svg><svg class="ri" style="left:1387.7px;stroke:#2b2e35" viewBox="0 0 24 24"><circle cx="12" cy="12" r="10"/><path d="M12 16v-5"/><circle cx="12" cy="7.6" r=".7" fill="#2b2e35"/></svg><svg class="ri" style="left:1413.9px;stroke:#2f6ed3" viewBox="0 0 24 24"><path d="M13 3H4a2 2 0 0 0-2 2v10a2 2 0 0 0 2 2h16a2 2 0 0 0 2-2v-4M8 21h8M12 17v4M17 2.5h5.5V8M22.5 2.5L15 10"/></svg></div><div class="row" style="top:609.53px"><span class="cb" style="left:30px;top:18px;border:1px solid #b9bcc3;"></span><span class="tc" style="left:-22.5px;">10</span><span class="tc" style="left:125.5px;letter-spacing:.45px">17043075297</span><span class="abs" style="left:289px;top:0;width:200px;height:52px;display:flex;align-items:center;justify-content:center"><svg width="16" height="12" viewBox="0 0 16 12" style="margin-right:4.5px;flex:none"><clipPath id="c9"><rect width="16" height="12" rx="1.8"/></clipPath><g clip-path="url(#c9)"><rect width="16" height="12" fill="#f4f4f4"/><path d="M0 .9h16M0 2.75h16M0 4.6h16M0 6.45h16M0 8.3h16M0 10.15h16M0 11.7h16" stroke="#c23b4b" stroke-width=".9"/><rect width="7.5" height="6.4" fill="#3c3b80"/></g></svg><span class="tx">US</span></span><span class="bd">Неизвестный тип</span><span class="tc" style="left:563px;">2 г 3 мес</span><span class="tc" style="left:720px;">-</span><span class="tc" style="left:897px;">10.12.24</span><span class="tc" style="left:1079px;">Анна Чверкова</span><svg class="ri" style="left:1322.2px;stroke:#2b2e35" viewBox="0 0 24 24"><path d="M22 19a2 2 0 0 1-2 2H4a2 2 0 0 1-2-2V5a2 2 0 0 1 2-2h5l2 3h9a2 2 0 0 1 2 2z"/></svg><svg class="ri" style="left:1348.4px;stroke:#2b2e35" viewBox="0 0 24 24"><circle cx="12" cy="12" r="4"/><path d="M16 8v5a3 3 0 0 0 6 0v-1a10 10 0 1 0-3.92 7.94"/></svg><svg class="ri" style="left:1374.6px;stroke:#2b2e35" viewBox="0 0 24 24"><circle cx="12" cy="12" r="10"/><path d="M12 16v-5"/><circle cx="12" cy="7.6" r=".7" fill="#2b2e35"/></svg><svg class="ri" style="left:1400.8px;stroke:#2f6ed3" viewBox="0 0 24 24"><path d="M13 3H4a2 2 0 0 0-2 2v10a2 2 0 0 0 2 2h16a2 2 0 0 0 2-2v-4M8 21h8M12 17v4M17 2.5h5.5V8M22.5 2.5L15 10"/></svg></div><div class="row" style="top:662.7px"><span class="cb" style="left:30px;top:18px;border:1px solid #b9bcc3;"></span><span class="tc" style="left:-22.5px;">11</span><span class="tc" style="left:125.5px;letter-spacing:.45px">79917312728</span><span class="abs" style="left:289px;top:0;width:200px;height:52px;display:flex;align-items:center;justify-content:center"><svg width="16" height="12" viewBox="0 0 16 12" style="margin-right:4.5px;flex:none"><clipPath id="c10"><rect width="16" height="12" rx="1.8"/></clipPath><g clip-path="url(#c10)"><rect width="16" height="4" fill="#f4f4f6"/><rect y="4" width="16" height="4" fill="#1c50b8"/><rect y="8" width="16" height="4" fill="#d52b1e"/></g></svg><span class="tx">RU</span></span><span class="bd">Неизвестный тип</span><span class="tc" style="left:563px;">3 г 3 мес</span><span class="tc" style="left:720px;">-</span><span class="tc" style="left:897px;">10.12.24</span><span class="tc" style="left:1079px;">Анна Чверкова</span><svg class="ri" style="left:1309.1px;stroke:#2b2e35" viewBox="0 0 24 24"><path d="M22 19a2 2 0 0 1-2 2H4a2 2 0 0 1-2-2V5a2 2 0 0 1 2-2h5l2 3h9a2 2 0 0 1 2 2z"/></svg><svg class="ri" style="left:1335.3px;stroke:#2b2e35" viewBox="0 0 24 24"><circle cx="12" cy="12" r="4"/><path d="M16 8v5a3 3 0 0 0 6 0v-1a10 10 0 1 0-3.92 7.94"/></svg><svg class="ri" style="left:1361.5px;stroke:#2b2e35" viewBox="0 0 24 24"><rect x="3" y="11" width="18" height="11" rx="2"/><path d="M7 11V7a5 5 0 0 1 10 0v4"/></svg><svg class="ri" style="left:1387.7px;stroke:#2b2e35" viewBox="0 0 24 24"><circle cx="12" cy="12" r="10"/><path d="M12 16v-5"/><circle cx="12" cy="7.6" r=".7" fill="#2b2e35"/></svg><svg class="ri" style="left:1413.9px;stroke:#2f6ed3" viewBox="0 0 24 24"><path d="M13 3H4a2 2 0 0 0-2 2v10a2 2 0 0 0 2 2h16a2 2 0 0 0 2-2v-4M8 21h8M12 17v4M17 2.5h5.5V8M22.5 2.5L15 10"/></svg></div><div class="row" style="top:715.87px"><span class="cb" style="left:30px;top:18px;border:1px solid #b9bcc3;"></span><span class="tc" style="left:-22.5px;">12</span><span class="tc" style="left:125.5px;letter-spacing:.45px">79935279551</span><span class="abs" style="left:289px;top:0;width:200px;height:52px;display:flex;align-items:center;justify-content:center"><svg width="16" height="12" viewBox="0 0 16 12" style="margin-right:4.5px;flex:none"><clipPath id="c11"><rect width="16" height="12" rx="1.8"/></clipPath><g clip-path="url(#c11)"><rect width="16" height="4" fill="#f4f4f6"/><rect y="4" width="16" height="4" fill="#1c50b8"/><rect y="8" width="16" height="4" fill="#d52b1e"/></g></svg><span class="tx">RU</span></span><span class="bd">Неизвестный тип</span><span class="tc" style="left:563px;">1 г 5 мес</span><span class="tc" style="left:720px;">После конверта...</span><span class="tc" style="left:897px;">10.12.24</span><span class="tc" style="left:1079px;">Богдан</span><svg class="ri" style="left:1322.2px;stroke:#2b2e35" viewBox="0 0 24 24"><path d="M22 19a2 2 0 0 1-2 2H4a2 2 0 0 1-2-2V5a2 2 0 0 1 2-2h5l2 3h9a2 2 0 0 1 2 2z"/></svg><svg class="ri" style="left:1348.4px;stroke:#2b2e35" viewBox="0 0 24 24"><circle cx="12" cy="12" r="4"/><path d="M16 8v5a3 3 0 0 0 6 0v-1a10 10 0 1 0-3.92 7.94"/></svg><svg class="ri" style="left:1374.6px;stroke:#2b2e35" viewBox="0 0 24 24"><circle cx="12" cy="12" r="10"/><path d="M12 16v-5"/><circle cx="12" cy="7.6" r=".7" fill="#2b2e35"/></svg><svg class="ri" style="left:1400.8px;stroke:#2f6ed3" viewBox="0 0 24 24"><path d="M13 3H4a2 2 0 0 0-2 2v10a2 2 0 0 0 2 2h16a2 2 0 0 0 2-2v-4M8 21h8M12 17v4M17 2.5h5.5V8M22.5 2.5L15 10"/></svg></div></div>
<!--/MAIN-->
</div>

<!--SCROLL-->
<div class="abs" style="left:1904px;top:23px;width:15px;height:1003px;background:#f1f2f4"></div><div class="abs" style="left:1905px;top:40px;width:13px;height:616px;background:#c1c2c4"></div><svg class="abs" style="left:1907px;top:29px" width="9" height="6" viewBox="0 0 9 6"><path d="M0.5 5.5L4.5 1L8.5 5.5z" fill="#a3a4a6"/></svg><svg class="abs" style="left:1907px;top:1019px" width="9" height="6" viewBox="0 0 9 6"><path d="M0.5 0.5L4.5 5L8.5 0.5z" fill="#505154"/></svg>
<!--/SCROLL-->
<!--WATERMARK-->
<svg class="abs" style="left:0;top:0;mix-blend-mode:multiply;pointer-events:none" width="1919" height="1026" viewBox="0 0 1919 1026"><g transform="translate(959.3,1075.9) rotate(-40.00)" font-family="Liberation Sans" font-weight="bold" font-size="55" fill="#70b148" stroke-linejoin="round"><text x="-103" y="19" textLength="81.5" lengthAdjust="spacingAndGlyphs" stroke="#70b148" stroke-width="2.5">SW.</text><text x="-21.5" y="19" textLength="130" lengthAdjust="spacingAndGlyphs" stroke="#70b148" stroke-width="2.5">BAND</text></g><g transform="translate(1101.6,956.4)"><circle r="42.8" fill="#86c440"/><path d="M 10.7 -25.0 C 5.1 -28.4 0.0 -29.7 -5.1 -29.1 C -16.4 -27.3 -27.6 -17.6 -28.9 -6.3 C -29.2 -1.2 -28.1 2.9 -26.1 4.4 L -32.8 6.4 C -34.3 3.4 -37.9 0.8 -42.2 1.0 L -41.1 11.9 C -27.6 9.5 -14.3 9.0 -5.1 5.9 L 9.2 -2.3 L 1.0 7.5 L 2.9 13.1 L -10.2 23.8 L 4.1 23.3 L -2.0 26.4 C 0.0 28.5 4.1 30.0 8.2 29.5 C 12.3 29.0 15.4 27.4 18.4 25.4 C 22.5 22.3 25.1 19.8 26.6 17.2 C 29.7 13.1 30.9 10.0 30.7 7.0 C 30.7 2.9 30.2 -0.2 28.7 -3.3 C 26.6 -7.4 23.5 -10.4 20.5 -11.5 C 16.4 -12.0 12.3 -11.5 8.2 -10.4 L -5.1 -5.3 C -8.2 -3.8 -10.2 -3.1 -12.3 -3.3 C -14.3 -3.8 -15.4 -4.8 -15.4 -6.3 C -15.6 -8.4 -15.1 -9.9 -14.3 -11.5 C -12.3 -14.5 -10.2 -15.8 -8.2 -16.1 C -6.1 -16.4 -4.6 -15.6 -3.1 -14.5 Z" fill="#fff"/><path d="M 8.2 15.1 C 6.7 14.6 5.3 14.1 4.6 13.1 L 2.0 13.9 L 1.2 8.2 C 4.1 6.4 6.1 5.1 8.2 4.4 C 10.2 3.4 12.3 2.9 13.3 2.9 C 15.4 3.4 16.4 4.4 16.4 5.9 C 16.6 8.0 16.2 9.5 15.4 11.1 C 13.8 13.1 12.3 14.1 10.2 14.6 Z" fill="#86c440"/></g><g transform="translate(1243.9,837.0) rotate(-40.00)" font-family="Liberation Sans" font-weight="bold" font-size="55" fill="#70b148" stroke-linejoin="round"><text x="-103" y="19" textLength="81.5" lengthAdjust="spacingAndGlyphs" stroke="#70b148" stroke-width="2.5">SW.</text><text x="-21.5" y="19" textLength="130" lengthAdjust="spacingAndGlyphs" stroke="#70b148" stroke-width="2.5">BAND</text></g><g transform="translate(1386.3,717.5)"><circle r="42.8" fill="#6aaa4a"/><path d="M 10.7 -25.0 C 5.1 -28.4 0.0 -29.7 -5.1 -29.1 C -16.4 -27.3 -27.6 -17.6 -28.9 -6.3 C -29.2 -1.2 -28.1 2.9 -26.1 4.4 L -32.8 6.4 C -34.3 3.4 -37.9 0.8 -42.2 1.0 L -41.1 11.9 C -27.6 9.5 -14.3 9.0 -5.1 5.9 L 9.2 -2.3 L 1.0 7.5 L 2.9 13.1 L -10.2 23.8 L 4.1 23.3 L -2.0 26.4 C 0.0 28.5 4.1 30.0 8.2 29.5 C 12.3 29.0 15.4 27.4 18.4 25.4 C 22.5 22.3 25.1 19.8 26.6 17.2 C 29.7 13.1 30.9 10.0 30.7 7.0 C 30.7 2.9 30.2 -0.2 28.7 -3.3 C 26.6 -7.4 23.5 -10.4 20.5 -11.5 C 16.4 -12.0 12.3 -11.5 8.2 -10.4 L -5.1 -5.3 C -8.2 -3.8 -10.2 -3.1 -12.3 -3.3 C -14.3 -3.8 -15.4 -4.8 -15.4 -6.3 C -15.6 -8.4 -15.1 -9.9 -14.3 -11.5 C -12.3 -14.5 -10.2 -15.8 -8.2 -16.1 C -6.1 -16.4 -4.6 -15.6 -3.1 -14.5 Z" fill="#fff"/><path d="M 8.2 15.1 C 6.7 14.6 5.3 14.1 4.6 13.1 L 2.0 13.9 L 1.2 8.2 C 4.1 6.4 6.1 5.1 8.2 4.4 C 10.2 3.4 12.3 2.9 13.3 2.9 C 15.4 3.4 16.4 4.4 16.4 5.9 C 16.6 8.0 16.2 9.5 15.4 11.1 C 13.8 13.1 12.3 14.1 10.2 14.6 Z" fill="#6aaa4a"/></g><g transform="translate(1528.6,598.0) rotate(-40.00)" font-family="Liberation Sans" font-weight="bold" font-size="55" fill="#70b148" stroke-linejoin="round"><text x="-103" y="19" textLength="81.5" lengthAdjust="spacingAndGlyphs" stroke="#70b148" stroke-width="2.5">SW.</text><text x="-21.5" y="19" textLength="130" lengthAdjust="spacingAndGlyphs" stroke="#70b148" stroke-width="2.5">BAND</text></g><g transform="translate(1671.0,478.6)"><circle r="42.8" fill="#86c440"/><path d="M 10.7 -25.0 C 5.1 -28.4 0.0 -29.7 -5.1 -29.1 C -16.4 -27.3 -27.6 -17.6 -28.9 -6.3 C -29.2 -1.2 -28.1 2.9 -26.1 4.4 L -32.8 6.4 C -34.3 3.4 -37.9 0.8 -42.2 1.0 L -41.1 11.9 C -27.6 9.5 -14.3 9.0 -5.1 5.9 L 9.2 -2.3 L 1.0 7.5 L 2.9 13.1 L -10.2 23.8 L 4.1 23.3 L -2.0 26.4 C 0.0 28.5 4.1 30.0 8.2 29.5 C 12.3 29.0 15.4 27.4 18.4 25.4 C 22.5 22.3 25.1 19.8 26.6 17.2 C 29.7 13.1 30.9 10.0 30.7 7.0 C 30.7 2.9 30.2 -0.2 28.7 -3.3 C 26.6 -7.4 23.5 -10.4 20.5 -11.5 C 16.4 -12.0 12.3 -11.5 8.2 -10.4 L -5.1 -5.3 C -8.2 -3.8 -10.2 -3.1 -12.3 -3.3 C -14.3 -3.8 -15.4 -4.8 -15.4 -6.3 C -15.6 -8.4 -15.1 -9.9 -14.3 -11.5 C -12.3 -14.5 -10.2 -15.8 -8.2 -16.1 C -6.1 -16.4 -4.6 -15.6 -3.1 -14.5 Z" fill="#fff"/><path d="M 8.2 15.1 C 6.7 14.6 5.3 14.1 4.6 13.1 L 2.0 13.9 L 1.2 8.2 C 4.1 6.4 6.1 5.1 8.2 4.4 C 10.2 3.4 12.3 2.9 13.3 2.9 C 15.4 3.4 16.4 4.4 16.4 5.9 C 16.6 8.0 16.2 9.5 15.4 11.1 C 13.8 13.1 12.3 14.1 10.2 14.6 Z" fill="#86c440"/></g><g transform="translate(1813.3,359.2) rotate(-40.00)" font-family="Liberation Sans" font-weight="bold" font-size="55" fill="#70b148" stroke-linejoin="round"><text x="-103" y="19" textLength="81.5" lengthAdjust="spacingAndGlyphs" stroke="#70b148" stroke-width="2.5">SW.</text><text x="-21.5" y="19" textLength="130" lengthAdjust="spacingAndGlyphs" stroke="#70b148" stroke-width="2.5">BAND</text></g><g transform="translate(1955.7,239.7)"><circle r="42.8" fill="#74b244"/><path d="M 10.7 -25.0 C 5.1 -28.4 0.0 -29.7 -5.1 -29.1 C -16.4 -27.3 -27.6 -17.6 -28.9 -6.3 C -29.2 -1.2 -28.1 2.9 -26.1 4.4 L -32.8 6.4 C -34.3 3.4 -37.9 0.8 -42.2 1.0 L -41.1 11.9 C -27.6 9.5 -14.3 9.0 -5.1 5.9 L 9.2 -2.3 L 1.0 7.5 L 2.9 13.1 L -10.2 23.8 L 4.1 23.3 L -2.0 26.4 C 0.0 28.5 4.1 30.0 8.2 29.5 C 12.3 29.0 15.4 27.4 18.4 25.4 C 22.5 22.3 25.1 19.8 26.6 17.2 C 29.7 13.1 30.9 10.0 30.7 7.0 C 30.7 2.9 30.2 -0.2 28.7 -3.3 C 26.6 -7.4 23.5 -10.4 20.5 -11.5 C 16.4 -12.0 12.3 -11.5 8.2 -10.4 L -5.1 -5.3 C -8.2 -3.8 -10.2 -3.1 -12.3 -3.3 C -14.3 -3.8 -15.4 -4.8 -15.4 -6.3 C -15.6 -8.4 -15.1 -9.9 -14.3 -11.5 C -12.3 -14.5 -10.2 -15.8 -8.2 -16.1 C -6.1 -16.4 -4.6 -15.6 -3.1 -14.5 Z" fill="#fff"/><path d="M 8.2 15.1 C 6.7 14.6 5.3 14.1 4.6 13.1 L 2.0 13.9 L 1.2 8.2 C 4.1 6.4 6.1 5.1 8.2 4.4 C 10.2 3.4 12.3 2.9 13.3 2.9 C 15.4 3.4 16.4 4.4 16.4 5.9 C 16.6 8.0 16.2 9.5 15.4 11.1 C 13.8 13.1 12.3 14.1 10.2 14.6 Z" fill="#74b244"/></g><g transform="translate(1160.9,1027.0) rotate(-40.00)" font-family="Liberation Sans" font-weight="bold" font-size="55" fill="#70b148" stroke-linejoin="round"><text x="-103" y="19" textLength="81.5" lengthAdjust="spacingAndGlyphs" stroke="#70b148" stroke-width="2.5">SW.</text><text x="-21.5" y="19" textLength="130" lengthAdjust="spacingAndGlyphs" stroke="#70b148" stroke-width="2.5">BAND</text></g><g transform="translate(1303.3,907.5)"><circle r="42.8" fill="#6aaa4a"/><path d="M 10.7 -25.0 C 5.1 -28.4 0.0 -29.7 -5.1 -29.1 C -16.4 -27.3 -27.6 -17.6 -28.9 -6.3 C -29.2 -1.2 -28.1 2.9 -26.1 4.4 L -32.8 6.4 C -34.3 3.4 -37.9 0.8 -42.2 1.0 L -41.1 11.9 C -27.6 9.5 -14.3 9.0 -5.1 5.9 L 9.2 -2.3 L 1.0 7.5 L 2.9 13.1 L -10.2 23.8 L 4.1 23.3 L -2.0 26.4 C 0.0 28.5 4.1 30.0 8.2 29.5 C 12.3 29.0 15.4 27.4 18.4 25.4 C 22.5 22.3 25.1 19.8 26.6 17.2 C 29.7 13.1 30.9 10.0 30.7 7.0 C 30.7 2.9 30.2 -0.2 28.7 -3.3 C 26.6 -7.4 23.5 -10.4 20.5 -11.5 C 16.4 -12.0 12.3 -11.5 8.2 -10.4 L -5.1 -5.3 C -8.2 -3.8 -10.2 -3.1 -12.3 -3.3 C -14.3 -3.8 -15.4 -4.8 -15.4 -6.3 C -15.6 -8.4 -15.1 -9.9 -14.3 -11.5 C -12.3 -14.5 -10.2 -15.8 -8.2 -16.1 C -6.1 -16.4 -4.6 -15.6 -3.1 -14.5 Z" fill="#fff"/><path d="M 8.2 15.1 C 6.7 14.6 5.3 14.1 4.6 13.1 L 2.0 13.9 L 1.2 8.2 C 4.1 6.4 6.1 5.1 8.2 4.4 C 10.2 3.4 12.3 2.9 13.3 2.9 C 15.4 3.4 16.4 4.4 16.4 5.9 C 16.6 8.0 16.2 9.5 15.4 11.1 C 13.8 13.1 12.3 14.1 10.2 14.6 Z" fill="#6aaa4a"/></g><g transform="translate(1445.6,788.0) rotate(-40.00)" font-family="Liberation Sans" font-weight="bold" font-size="55" fill="#70b148" stroke-linejoin="round"><text x="-103" y="19" textLength="81.5" lengthAdjust="spacingAndGlyphs" stroke="#70b148" stroke-width="2.5">SW.</text><text x="-21.5" y="19" textLength="130" lengthAdjust="spacingAndGlyphs" stroke="#70b148" stroke-width="2.5">BAND</text></g><g transform="translate(1588.0,668.6)"><circle r="42.8" fill="#86c440"/><path d="M 10.7 -25.0 C 5.1 -28.4 0.0 -29.7 -5.1 -29.1 C -16.4 -27.3 -27.6 -17.6 -28.9 -6.3 C -29.2 -1.2 -28.1 2.9 -26.1 4.4 L -32.8 6.4 C -34.3 3.4 -37.9 0.8 -42.2 1.0 L -41.1 11.9 C -27.6 9.5 -14.3 9.0 -5.1 5.9 L 9.2 -2.3 L 1.0 7.5 L 2.9 13.1 L -10.2 23.8 L 4.1 23.3 L -2.0 26.4 C 0.0 28.5 4.1 30.0 8.2 29.5 C 12.3 29.0 15.4 27.4 18.4 25.4 C 22.5 22.3 25.1 19.8 26.6 17.2 C 29.7 13.1 30.9 10.0 30.7 7.0 C 30.7 2.9 30.2 -0.2 28.7 -3.3 C 26.6 -7.4 23.5 -10.4 20.5 -11.5 C 16.4 -12.0 12.3 -11.5 8.2 -10.4 L -5.1 -5.3 C -8.2 -3.8 -10.2 -3.1 -12.3 -3.3 C -14.3 -3.8 -15.4 -4.8 -15.4 -6.3 C -15.6 -8.4 -15.1 -9.9 -14.3 -11.5 C -12.3 -14.5 -10.2 -15.8 -8.2 -16.1 C -6.1 -16.4 -4.6 -15.6 -3.1 -14.5 Z" fill="#fff"/><path d="M 8.2 15.1 C 6.7 14.6 5.3 14.1 4.6 13.1 L 2.0 13.9 L 1.2 8.2 C 4.1 6.4 6.1 5.1 8.2 4.4 C 10.2 3.4 12.3 2.9 13.3 2.9 C 15.4 3.4 16.4 4.4 16.4 5.9 C 16.6 8.0 16.2 9.5 15.4 11.1 C 13.8 13.1 12.3 14.1 10.2 14.6 Z" fill="#86c440"/></g><g transform="translate(1730.3,549.1) rotate(-40.00)" font-family="Liberation Sans" font-weight="bold" font-size="55" fill="#70b148" stroke-linejoin="round"><text x="-103" y="19" textLength="81.5" lengthAdjust="spacingAndGlyphs" stroke="#70b148" stroke-width="2.5">SW.</text><text x="-21.5" y="19" textLength="130" lengthAdjust="spacingAndGlyphs" stroke="#70b148" stroke-width="2.5">BAND</text></g><g transform="translate(1872.7,429.7)"><circle r="42.8" fill="#6aaa4a"/><path d="M 10.7 -25.0 C 5.1 -28.4 0.0 -29.7 -5.1 -29.1 C -16.4 -27.3 -27.6 -17.6 -28.9 -6.3 C -29.2 -1.2 -28.1 2.9 -26.1 4.4 L -32.8 6.4 C -34.3 3.4 -37.9 0.8 -42.2 1.0 L -41.1 11.9 C -27.6 9.5 -14.3 9.0 -5.1 5.9 L 9.2 -2.3 L 1.0 7.5 L 2.9 13.1 L -10.2 23.8 L 4.1 23.3 L -2.0 26.4 C 0.0 28.5 4.1 30.0 8.2 29.5 C 12.3 29.0 15.4 27.4 18.4 25.4 C 22.5 22.3 25.1 19.8 26.6 17.2 C 29.7 13.1 30.9 10.0 30.7 7.0 C 30.7 2.9 30.2 -0.2 28.7 -3.3 C 26.6 -7.4 23.5 -10.4 20.5 -11.5 C 16.4 -12.0 12.3 -11.5 8.2 -10.4 L -5.1 -5.3 C -8.2 -3.8 -10.2 -3.1 -12.3 -3.3 C -14.3 -3.8 -15.4 -4.8 -15.4 -6.3 C -15.6 -8.4 -15.1 -9.9 -14.3 -11.5 C -12.3 -14.5 -10.2 -15.8 -8.2 -16.1 C -6.1 -16.4 -4.6 -15.6 -3.1 -14.5 Z" fill="#fff"/><path d="M 8.2 15.1 C 6.7 14.6 5.3 14.1 4.6 13.1 L 2.0 13.9 L 1.2 8.2 C 4.1 6.4 6.1 5.1 8.2 4.4 C 10.2 3.4 12.3 2.9 13.3 2.9 C 15.4 3.4 16.4 4.4 16.4 5.9 C 16.6 8.0 16.2 9.5 15.4 11.1 C 13.8 13.1 12.3 14.1 10.2 14.6 Z" fill="#6aaa4a"/></g><g transform="translate(2015.0,310.3) rotate(-40.00)" font-family="Liberation Sans" font-weight="bold" font-size="55" fill="#70b148" stroke-linejoin="round"><text x="-103" y="19" textLength="81.5" lengthAdjust="spacingAndGlyphs" stroke="#70b148" stroke-width="2.5">SW.</text><text x="-21.5" y="19" textLength="130" lengthAdjust="spacingAndGlyphs" stroke="#70b148" stroke-width="2.5">BAND</text></g><g transform="translate(1362.6,978.0) rotate(-40.00)" font-family="Liberation Sans" font-weight="bold" font-size="55" fill="#70b148" stroke-linejoin="round"><text x="-103" y="19" textLength="81.5" lengthAdjust="spacingAndGlyphs" stroke="#70b148" stroke-width="2.5">SW.</text><text x="-21.5" y="19" textLength="130" lengthAdjust="spacingAndGlyphs" stroke="#70b148" stroke-width="2.5">BAND</text></g><g transform="translate(1505.0,858.6)"><circle r="42.8" fill="#86c440"/><path d="M 10.7 -25.0 C 5.1 -28.4 0.0 -29.7 -5.1 -29.1 C -16.4 -27.3 -27.6 -17.6 -28.9 -6.3 C -29.2 -1.2 -28.1 2.9 -26.1 4.4 L -32.8 6.4 C -34.3 3.4 -37.9 0.8 -42.2 1.0 L -41.1 11.9 C -27.6 9.5 -14.3 9.0 -5.1 5.9 L 9.2 -2.3 L 1.0 7.5 L 2.9 13.1 L -10.2 23.8 L 4.1 23.3 L -2.0 26.4 C 0.0 28.5 4.1 30.0 8.2 29.5 C 12.3 29.0 15.4 27.4 18.4 25.4 C 22.5 22.3 25.1 19.8 26.6 17.2 C 29.7 13.1 30.9 10.0 30.7 7.0 C 30.7 2.9 30.2 -0.2 28.7 -3.3 C 26.6 -7.4 23.5 -10.4 20.5 -11.5 C 16.4 -12.0 12.3 -11.5 8.2 -10.4 L -5.1 -5.3 C -8.2 -3.8 -10.2 -3.1 -12.3 -3.3 C -14.3 -3.8 -15.4 -4.8 -15.4 -6.3 C -15.6 -8.4 -15.1 -9.9 -14.3 -11.5 C -12.3 -14.5 -10.2 -15.8 -8.2 -16.1 C -6.1 -16.4 -4.6 -15.6 -3.1 -14.5 Z" fill="#fff"/><path d="M 8.2 15.1 C 6.7 14.6 5.3 14.1 4.6 13.1 L 2.0 13.9 L 1.2 8.2 C 4.1 6.4 6.1 5.1 8.2 4.4 C 10.2 3.4 12.3 2.9 13.3 2.9 C 15.4 3.4 16.4 4.4 16.4 5.9 C 16.6 8.0 16.2 9.5 15.4 11.1 C 13.8 13.1 12.3 14.1 10.2 14.6 Z" fill="#86c440"/></g><g transform="translate(1647.3,739.1) rotate(-40.00)" font-family="Liberation Sans" font-weight="bold" font-size="55" fill="#70b148" stroke-linejoin="round"><text x="-103" y="19" textLength="81.5" lengthAdjust="spacingAndGlyphs" stroke="#70b148" stroke-width="2.5">SW.</text><text x="-21.5" y="19" textLength="130" lengthAdjust="spacingAndGlyphs" stroke="#70b148" stroke-width="2.5">BAND</text></g><g transform="translate(1789.7,619.7)"><circle r="42.8" fill="#6aaa4a"/><path d="M 10.7 -25.0 C 5.1 -28.4 0.0 -29.7 -5.1 -29.1 C -16.4 -27.3 -27.6 -17.6 -28.9 -6.3 C -29.2 -1.2 -28.1 2.9 -26.1 4.4 L -32.8 6.4 C -34.3 3.4 -37.9 0.8 -42.2 1.0 L -41.1 11.9 C -27.6 9.5 -14.3 9.0 -5.1 5.9 L 9.2 -2.3 L 1.0 7.5 L 2.9 13.1 L -10.2 23.8 L 4.1 23.3 L -2.0 26.4 C 0.0 28.5 4.1 30.0 8.2 29.5 C 12.3 29.0 15.4 27.4 18.4 25.4 C 22.5 22.3 25.1 19.8 26.6 17.2 C 29.7 13.1 30.9 10.0 30.7 7.0 C 30.7 2.9 30.2 -0.2 28.7 -3.3 C 26.6 -7.4 23.5 -10.4 20.5 -11.5 C 16.4 -12.0 12.3 -11.5 8.2 -10.4 L -5.1 -5.3 C -8.2 -3.8 -10.2 -3.1 -12.3 -3.3 C -14.3 -3.8 -15.4 -4.8 -15.4 -6.3 C -15.6 -8.4 -15.1 -9.9 -14.3 -11.5 C -12.3 -14.5 -10.2 -15.8 -8.2 -16.1 C -6.1 -16.4 -4.6 -15.6 -3.1 -14.5 Z" fill="#fff"/><path d="M 8.2 15.1 C 6.7 14.6 5.3 14.1 4.6 13.1 L 2.0 13.9 L 1.2 8.2 C 4.1 6.4 6.1 5.1 8.2 4.4 C 10.2 3.4 12.3 2.9 13.3 2.9 C 15.4 3.4 16.4 4.4 16.4 5.9 C 16.6 8.0 16.2 9.5 15.4 11.1 C 13.8 13.1 12.3 14.1 10.2 14.6 Z" fill="#6aaa4a"/></g><g transform="translate(1932.0,500.3) rotate(-40.00)" font-family="Liberation Sans" font-weight="bold" font-size="55" fill="#70b148" stroke-linejoin="round"><text x="-103" y="19" textLength="81.5" lengthAdjust="spacingAndGlyphs" stroke="#70b148" stroke-width="2.5">SW.</text><text x="-21.5" y="19" textLength="130" lengthAdjust="spacingAndGlyphs" stroke="#70b148" stroke-width="2.5">BAND</text></g><g transform="translate(1422.0,1048.6)"><circle r="42.8" fill="#74b244"/><path d="M 10.7 -25.0 C 5.1 -28.4 0.0 -29.7 -5.1 -29.1 C -16.4 -27.3 -27.6 -17.6 -28.9 -6.3 C -29.2 -1.2 -28.1 2.9 -26.1 4.4 L -32.8 6.4 C -34.3 3.4 -37.9 0.8 -42.2 1.0 L -41.1 11.9 C -27.6 9.5 -14.3 9.0 -5.1 5.9 L 9.2 -2.3 L 1.0 7.5 L 2.9 13.1 L -10.2 23.8 L 4.1 23.3 L -2.0 26.4 C 0.0 28.5 4.1 30.0 8.2 29.5 C 12.3 29.0 15.4 27.4 18.4 25.4 C 22.5 22.3 25.1 19.8 26.6 17.2 C 29.7 13.1 30.9 10.0 30.7 7.0 C 30.7 2.9 30.2 -0.2 28.7 -3.3 C 26.6 -7.4 23.5 -10.4 20.5 -11.5 C 16.4 -12.0 12.3 -11.5 8.2 -10.4 L -5.1 -5.3 C -8.2 -3.8 -10.2 -3.1 -12.3 -3.3 C -14.3 -3.8 -15.4 -4.8 -15.4 -6.3 C -15.6 -8.4 -15.1 -9.9 -14.3 -11.5 C -12.3 -14.5 -10.2 -15.8 -8.2 -16.1 C -6.1 -16.4 -4.6 -15.6 -3.1 -14.5 Z" fill="#fff"/><path d="M 8.2 15.1 C 6.7 14.6 5.3 14.1 4.6 13.1 L 2.0 13.9 L 1.2 8.2 C 4.1 6.4 6.1 5.1 8.2 4.4 C 10.2 3.4 12.3 2.9 13.3 2.9 C 15.4 3.4 16.4 4.4 16.4 5.9 C 16.6 8.0 16.2 9.5 15.4 11.1 C 13.8 13.1 12.3 14.1 10.2 14.6 Z" fill="#74b244"/></g><g transform="translate(1564.3,929.1) rotate(-40.00)" font-family="Liberation Sans" font-weight="bold" font-size="55" fill="#70b148" stroke-linejoin="round"><text x="-103" y="19" textLength="81.5" lengthAdjust="spacingAndGlyphs" stroke="#70b148" stroke-width="2.5">SW.</text><text x="-21.5" y="19" textLength="130" lengthAdjust="spacingAndGlyphs" stroke="#70b148" stroke-width="2.5">BAND</text></g><g transform="translate(1706.7,809.7)"><circle r="42.8" fill="#86c440"/><path d="M 10.7 -25.0 C 5.1 -28.4 0.0 -29.7 -5.1 -29.1 C -16.4 -27.3 -27.6 -17.6 -28.9 -6.3 C -29.2 -1.2 -28.1 2.9 -26.1 4.4 L -32.8 6.4 C -34.3 3.4 -37.9 0.8 -42.2 1.0 L -41.1 11.9 C -27.6 9.5 -14.3 9.0 -5.1 5.9 L 9.2 -2.3 L 1.0 7.5 L 2.9 13.1 L -10.2 23.8 L 4.1 23.3 L -2.0 26.4 C 0.0 28.5 4.1 30.0 8.2 29.5 C 12.3 29.0 15.4 27.4 18.4 25.4 C 22.5 22.3 25.1 19.8 26.6 17.2 C 29.7 13.1 30.9 10.0 30.7 7.0 C 30.7 2.9 30.2 -0.2 28.7 -3.3 C 26.6 -7.4 23.5 -10.4 20.5 -11.5 C 16.4 -12.0 12.3 -11.5 8.2 -10.4 L -5.1 -5.3 C -8.2 -3.8 -10.2 -3.1 -12.3 -3.3 C -14.3 -3.8 -15.4 -4.8 -15.4 -6.3 C -15.6 -8.4 -15.1 -9.9 -14.3 -11.5 C -12.3 -14.5 -10.2 -15.8 -8.2 -16.1 C -6.1 -16.4 -4.6 -15.6 -3.1 -14.5 Z" fill="#fff"/><path d="M 8.2 15.1 C 6.7 14.6 5.3 14.1 4.6 13.1 L 2.0 13.9 L 1.2 8.2 C 4.1 6.4 6.1 5.1 8.2 4.4 C 10.2 3.4 12.3 2.9 13.3 2.9 C 15.4 3.4 16.4 4.4 16.4 5.9 C 16.6 8.0 16.2 9.5 15.4 11.1 C 13.8 13.1 12.3 14.1 10.2 14.6 Z" fill="#86c440"/></g><g transform="translate(1849.0,690.2) rotate(-40.00)" font-family="Liberation Sans" font-weight="bold" font-size="55" fill="#70b148" stroke-linejoin="round"><text x="-103" y="19" textLength="81.5" lengthAdjust="spacingAndGlyphs" stroke="#70b148" stroke-width="2.5">SW.</text><text x="-21.5" y="19" textLength="130" lengthAdjust="spacingAndGlyphs" stroke="#70b148" stroke-width="2.5">BAND</text></g><g transform="translate(1481.3,1119.1) rotate(-40.00)" font-family="Liberation Sans" font-weight="bold" font-size="55" fill="#70b148" stroke-linejoin="round"><text x="-103" y="19" textLength="81.5" lengthAdjust="spacingAndGlyphs" stroke="#70b148" stroke-width="2.5">SW.</text><text x="-21.5" y="19" textLength="130" lengthAdjust="spacingAndGlyphs" stroke="#70b148" stroke-width="2.5">BAND</text></g><g transform="translate(1623.7,999.7)"><circle r="42.8" fill="#6aaa4a"/><path d="M 10.7 -25.0 C 5.1 -28.4 0.0 -29.7 -5.1 -29.1 C -16.4 -27.3 -27.6 -17.6 -28.9 -6.3 C -29.2 -1.2 -28.1 2.9 -26.1 4.4 L -32.8 6.4 C -34.3 3.4 -37.9 0.8 -42.2 1.0 L -41.1 11.9 C -27.6 9.5 -14.3 9.0 -5.1 5.9 L 9.2 -2.3 L 1.0 7.5 L 2.9 13.1 L -10.2 23.8 L 4.1 23.3 L -2.0 26.4 C 0.0 28.5 4.1 30.0 8.2 29.5 C 12.3 29.0 15.4 27.4 18.4 25.4 C 22.5 22.3 25.1 19.8 26.6 17.2 C 29.7 13.1 30.9 10.0 30.7 7.0 C 30.7 2.9 30.2 -0.2 28.7 -3.3 C 26.6 -7.4 23.5 -10.4 20.5 -11.5 C 16.4 -12.0 12.3 -11.5 8.2 -10.4 L -5.1 -5.3 C -8.2 -3.8 -10.2 -3.1 -12.3 -3.3 C -14.3 -3.8 -15.4 -4.8 -15.4 -6.3 C -15.6 -8.4 -15.1 -9.9 -14.3 -11.5 C -12.3 -14.5 -10.2 -15.8 -8.2 -16.1 C -6.1 -16.4 -4.6 -15.6 -3.1 -14.5 Z" fill="#fff"/><path d="M 8.2 15.1 C 6.7 14.6 5.3 14.1 4.6 13.1 L 2.0 13.9 L 1.2 8.2 C 4.1 6.4 6.1 5.1 8.2 4.4 C 10.2 3.4 12.3 2.9 13.3 2.9 C 15.4 3.4 16.4 4.4 16.4 5.9 C 16.6 8.0 16.2 9.5 15.4 11.1 C 13.8 13.1 12.3 14.1 10.2 14.6 Z" fill="#6aaa4a"/></g><g transform="translate(1766.0,880.2) rotate(-40.00)" font-family="Liberation Sans" font-weight="bold" font-size="55" fill="#70b148" stroke-linejoin="round"><text x="-103" y="19" textLength="81.5" lengthAdjust="spacingAndGlyphs" stroke="#70b148" stroke-width="2.5">SW.</text><text x="-21.5" y="19" textLength="130" lengthAdjust="spacingAndGlyphs" stroke="#70b148" stroke-width="2.5">BAND</text></g><g transform="translate(1908.4,760.8)"><circle r="42.8" fill="#86c440"/><path d="M 10.7 -25.0 C 5.1 -28.4 0.0 -29.7 -5.1 -29.1 C -16.4 -27.3 -27.6 -17.6 -28.9 -6.3 C -29.2 -1.2 -28.1 2.9 -26.1 4.4 L -32.8 6.4 C -34.3 3.4 -37.9 0.8 -42.2 1.0 L -41.1 11.9 C -27.6 9.5 -14.3 9.0 -5.1 5.9 L 9.2 -2.3 L 1.0 7.5 L 2.9 13.1 L -10.2 23.8 L 4.1 23.3 L -2.0 26.4 C 0.0 28.5 4.1 30.0 8.2 29.5 C 12.3 29.0 15.4 27.4 18.4 25.4 C 22.5 22.3 25.1 19.8 26.6 17.2 C 29.7 13.1 30.9 10.0 30.7 7.0 C 30.7 2.9 30.2 -0.2 28.7 -3.3 C 26.6 -7.4 23.5 -10.4 20.5 -11.5 C 16.4 -12.0 12.3 -11.5 8.2 -10.4 L -5.1 -5.3 C -8.2 -3.8 -10.2 -3.1 -12.3 -3.3 C -14.3 -3.8 -15.4 -4.8 -15.4 -6.3 C -15.6 -8.4 -15.1 -9.9 -14.3 -11.5 C -12.3 -14.5 -10.2 -15.8 -8.2 -16.1 C -6.1 -16.4 -4.6 -15.6 -3.1 -14.5 Z" fill="#fff"/><path d="M 8.2 15.1 C 6.7 14.6 5.3 14.1 4.6 13.1 L 2.0 13.9 L 1.2 8.2 C 4.1 6.4 6.1 5.1 8.2 4.4 C 10.2 3.4 12.3 2.9 13.3 2.9 C 15.4 3.4 16.4 4.4 16.4 5.9 C 16.6 8.0 16.2 9.5 15.4 11.1 C 13.8 13.1 12.3 14.1 10.2 14.6 Z" fill="#86c440"/></g><g transform="translate(2050.8,641.3) rotate(-40.00)" font-family="Liberation Sans" font-weight="bold" font-size="55" fill="#70b148" stroke-linejoin="round"><text x="-103" y="19" textLength="81.5" lengthAdjust="spacingAndGlyphs" stroke="#70b148" stroke-width="2.5">SW.</text><text x="-21.5" y="19" textLength="130" lengthAdjust="spacingAndGlyphs" stroke="#70b148" stroke-width="2.5">BAND</text></g><g transform="translate(1683.0,1070.2) rotate(-40.00)" font-family="Liberation Sans" font-weight="bold" font-size="55" fill="#70b148" stroke-linejoin="round"><text x="-103" y="19" textLength="81.5" lengthAdjust="spacingAndGlyphs" stroke="#70b148" stroke-width="2.5">SW.</text><text x="-21.5" y="19" textLength="130" lengthAdjust="spacingAndGlyphs" stroke="#70b148" stroke-width="2.5">BAND</text></g><g transform="translate(1825.4,950.8)"><circle r="42.8" fill="#6aaa4a"/><path d="M 10.7 -25.0 C 5.1 -28.4 0.0 -29.7 -5.1 -29.1 C -16.4 -27.3 -27.6 -17.6 -28.9 -6.3 C -29.2 -1.2 -28.1 2.9 -26.1 4.4 L -32.8 6.4 C -34.3 3.4 -37.9 0.8 -42.2 1.0 L -41.1 11.9 C -27.6 9.5 -14.3 9.0 -5.1 5.9 L 9.2 -2.3 L 1.0 7.5 L 2.9 13.1 L -10.2 23.8 L 4.1 23.3 L -2.0 26.4 C 0.0 28.5 4.1 30.0 8.2 29.5 C 12.3 29.0 15.4 27.4 18.4 25.4 C 22.5 22.3 25.1 19.8 26.6 17.2 C 29.7 13.1 30.9 10.0 30.7 7.0 C 30.7 2.9 30.2 -0.2 28.7 -3.3 C 26.6 -7.4 23.5 -10.4 20.5 -11.5 C 16.4 -12.0 12.3 -11.5 8.2 -10.4 L -5.1 -5.3 C -8.2 -3.8 -10.2 -3.1 -12.3 -3.3 C -14.3 -3.8 -15.4 -4.8 -15.4 -6.3 C -15.6 -8.4 -15.1 -9.9 -14.3 -11.5 C -12.3 -14.5 -10.2 -15.8 -8.2 -16.1 C -6.1 -16.4 -4.6 -15.6 -3.1 -14.5 Z" fill="#fff"/><path d="M 8.2 15.1 C 6.7 14.6 5.3 14.1 4.6 13.1 L 2.0 13.9 L 1.2 8.2 C 4.1 6.4 6.1 5.1 8.2 4.4 C 10.2 3.4 12.3 2.9 13.3 2.9 C 15.4 3.4 16.4 4.4 16.4 5.9 C 16.6 8.0 16.2 9.5 15.4 11.1 C 13.8 13.1 12.3 14.1 10.2 14.6 Z" fill="#6aaa4a"/></g><g transform="translate(1967.8,831.3) rotate(-40.00)" font-family="Liberation Sans" font-weight="bold" font-size="55" fill="#70b148" stroke-linejoin="round"><text x="-103" y="19" textLength="81.5" lengthAdjust="spacingAndGlyphs" stroke="#70b148" stroke-width="2.5">SW.</text><text x="-21.5" y="19" textLength="130" lengthAdjust="spacingAndGlyphs" stroke="#70b148" stroke-width="2.5">BAND</text></g><g transform="translate(1884.8,1021.3) rotate(-40.00)" font-family="Liberation Sans" font-weight="bold" font-size="55" fill="#70b148" stroke-linejoin="round"><text x="-103" y="19" textLength="81.5" lengthAdjust="spacingAndGlyphs" stroke="#70b148" stroke-width="2.5">SW.</text><text x="-21.5" y="19" textLength="130" lengthAdjust="spacingAndGlyphs" stroke="#70b148" stroke-width="2.5">BAND</text></g></svg>
<!--/WATERMARK-->
</body>
</html>
